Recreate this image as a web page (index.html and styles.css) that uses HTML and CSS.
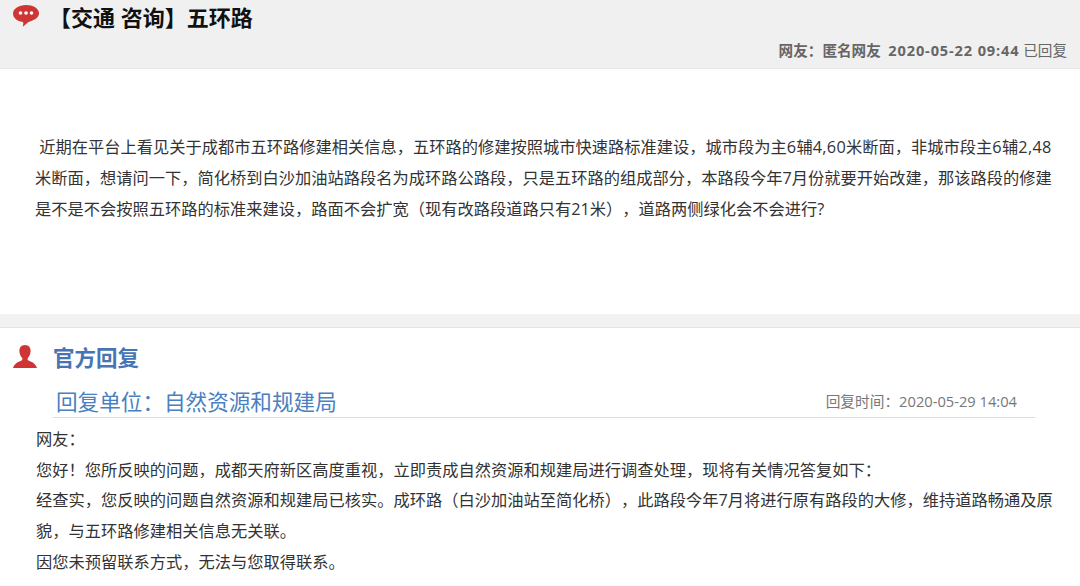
FILE: index.html
```html
<!DOCTYPE html>
<html lang="zh-CN">
<head>
<meta charset="utf-8">
<title>五环路</title>
<link rel="stylesheet" href="styles.css">
</head>
<body>
<header class="head">
  <div class="title-row">
    <svg class="bubble" viewBox="0 0 26 22" width="26" height="22"><path d="M13 0C6 0 0 3.600 0 8.500c0 4.300 3.800 7.500 9 8.300 1 .2 1.400 .8 1.300 1.700l-.5 3.200 5.700-4.800c.5-.3 1-.4 1.500-.5C22 15 26 12.400 26 8.300 26 3.500 20 0 13 0z" fill="#cf3535"/><circle cx="7.500" cy="8" r="1.800" fill="#fff"/><circle cx="13" cy="8" r="1.800" fill="#fff"/><circle cx="18.500" cy="8" r="1.800" fill="#fff"/></svg>
    <h1 class="title">【交通 咨询】五环路</h1>
  </div>
  <div class="meta"><b>网友：匿名网友&nbsp;&nbsp;<span class="stamp">2020-05-22 09:44</span></b> 已回复</div>
</header>
<section class="question">
  <p>&nbsp;近期在平台上看见关于成都市五环路修建相关信息，五环路的修建按照城市快速路标准建设，城市段为主<span class="num">6</span>辅<span class="num">4,60</span>米断面，非城市段主<span class="num">6</span>辅<span class="num">2,48</span>米断面，想请问一下，简化桥到白沙加油站路段名为成环路公路段，只是五环路的组成部分，本路段今年7月份就要开始改建，那该路段的修建是不是不会按照五环路的标准来建设，路面不会扩宽（现有改路段道路只有21米），道路两侧绿化会不会进行?</p>
</section>
<div class="band"></div>
<section class="reply">
  <div class="reply-head">
    <svg class="person" viewBox="0 0 24 23" width="24" height="23"><path d="M12 0c-3.800 0-5.800 2.800-5.600 6.300.1 2.500 1.100 5 2.600 6.500.7 .8 .6 2-.4 2.600C6 16.700 1.500 17.800 0 23h24c-1.500-5.200-6-6.300-8.600-7.600-1-.6-1.100-1.800-.4-2.600 1.500-1.500 2.500-4 2.600-6.500C17.800 2.800 15.800 0 12 0z" fill="#cf3535"/></svg>
    <h2 class="official">官方回复</h2>
  </div>
  <div class="unit-row">
    <span class="unit">回复单位：自然资源和规建局</span>
    <span class="time">回复时间：2020-05-29 14:04</span>
  </div>
  <div class="answer">
    <p>网友：</p>
    <p>您好！您所反映的问题，成都天府新区高度重视，立即责成自然资源和规建局进行调查处理，现将有关情况答复如下：</p>
    <p>经查实，您反映的问题自然资源和规建局已核实。成环路（白沙加油站至简化桥），此路段今年7月将进行原有路段的大修，维持道路畅通及原貌，与五环路修建相关信息无关联。</p>
    <p>因您未预留联系方式，无法与您取得联系。</p>
  </div>
</section>
</body>
</html>
```
FILE: styles.css
```css
* { box-sizing: border-box; margin: 0; padding: 0; }
html, body { height: 586px; overflow: hidden; }
body { background: #fff; color: #333; font-family: "Open Sans", "Noto Sans CJK SC", sans-serif; font-size: 16.250px; text-spacing-trim: space-all; }
.head { height: 69px; background: #f0f0f0; border-bottom: 1px solid #e8e8e8; }
.title-row { display: flex; align-items: flex-start; height: 36px; padding: 5px 0 0 13px; }
.bubble { flex: none; }
.title { font-size: 22px; font-weight: 700; color: #111; margin: -2px 0 0 10px; line-height: 28px; }
.meta { text-align: right; padding-right: 13px; font-size: 14.600px; line-height: 28px; color: #666; }
.meta b { font-weight: 700; }
.stamp { letter-spacing: .85px; }
.num { letter-spacing: .35px; }
.question { height: 245px; padding: 63px 20px 0 35px; }
.question p { line-height: 31px; color: #333; }
.band { height: 14px; background: #f2f2f2; border-bottom: 1px solid #e4e4e4; }
.reply-head { display: flex; align-items: center; height: 54px; padding: 2px 0 0 13px; }
.official { font-size: 21.500px; font-weight: 700; color: #4674b4; margin-left: 16px; }
.unit-row { display: flex; justify-content: space-between; align-items: center; margin: 0 45px 0 53px; height: 36px; border-bottom: 1px solid #ddd; padding: 1px 18px 0 3px; }
.unit { font-size: 21.600px; color: #4a7fc1; }
.time { font-size: 14.700px; color: #777; }
.answer { padding: 6px 20px 0 36px; }
.answer p { line-height: 30.700px; color: #333; }
```
